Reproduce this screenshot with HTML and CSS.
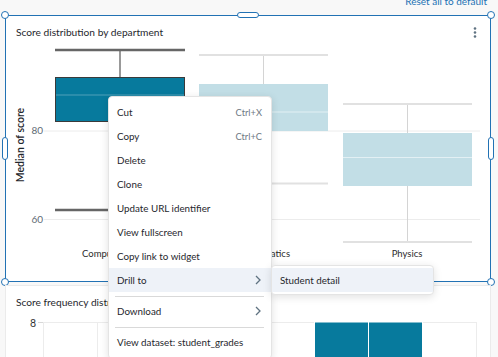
FILE: index.html
```html
<!DOCTYPE html>
<html>
<head>
<meta charset="utf-8">
<link rel="stylesheet" href="styles.css">
</head>
<body>
<div class="page">
  <div class="topbar"><span class="reset">Reset all to default</span></div>

  <section class="widget selected">
    <header class="w-head">
      <h2 class="w-title">Score distribution by department</h2>
      <svg class="kebab" width="4" height="12" viewBox="0 0 4 12"><circle cx="2" cy="1.5" r="1.3"/><circle cx="2" cy="5.5" r="1.3"/><circle cx="2" cy="9.5" r="1.3"/></svg>
    </header>
    <svg class="chart" width="484" height="236" viewBox="0 0 484 236">
      <g transform="translate(-6,-44)">
        <line class="grid" x1="44" y1="131" x2="480" y2="131"/>
        <line class="grid" x1="44" y1="219.5" x2="480" y2="219.5"/>
        <text class="tick" x="43" y="133.5" text-anchor="end">80</text>
        <text class="tick" x="43" y="222.5" text-anchor="end">60</text>
        <text class="axis-title" transform="translate(24,145) rotate(-90)" text-anchor="middle">Median of score</text>

        <line class="stem-dark" x1="120" y1="50" x2="120" y2="77"/>
        <line class="stem-dark" x1="120" y1="121" x2="120" y2="210"/>
        <line class="cap-dark" x1="55" y1="50" x2="185" y2="50"/>
        <line class="cap-dark" x1="55" y1="210" x2="185" y2="210"/>
        <rect class="box-dark" x="55.5" y="77.5" width="129" height="44"/>
        <line class="median-dark" x1="56" y1="95" x2="184" y2="95"/>

        <line class="stem-light" x1="263.5" y1="55" x2="263.5" y2="84"/>
        <line class="stem-light" x1="263.5" y1="131" x2="263.5" y2="183"/>
        <line class="cap-light" x1="199" y1="55" x2="328" y2="55"/>
        <line class="cap-light" x1="199" y1="183.5" x2="328" y2="183.5"/>
        <rect class="box-light" x="199" y="84" width="129" height="47"/>
        <line class="median-light" x1="199" y1="112" x2="328" y2="112"/>

        <line class="stem-light" x1="407.5" y1="104" x2="407.5" y2="133"/>
        <line class="stem-light" x1="407.5" y1="186" x2="407.5" y2="242"/>
        <line class="cap-light" x1="343" y1="104" x2="472" y2="104"/>
        <line class="cap-light" x1="343" y1="242" x2="472" y2="242"/>
        <rect class="box-light" x="343" y="133" width="129" height="53"/>
        <line class="median-light" x1="343" y1="157.5" x2="472" y2="157.5"/>

        <text class="xlab" x="120" y="257" text-anchor="middle">Computer Science</text>
        <text class="xlab" x="263" y="257" text-anchor="middle">Mathematics</text>
        <text class="xlab" x="407" y="257" text-anchor="middle">Physics</text>
      </g>
    </svg>
    <span class="handle corner tl"></span>
    <span class="handle corner tr"></span>
    <span class="handle corner bl"></span>
    <span class="handle corner br"></span>
    <span class="handle pill-h top"></span>
    <span class="handle pill-v left"></span>
    <span class="handle pill-v right"></span>
  </section>

  <section class="widget second">
    <header class="w-head">
      <h2 class="w-title">Score frequency distribution</h2>
    </header>
    <svg class="chart2" width="484" height="60" viewBox="0 0 484 60">
      <g transform="translate(-6,-314)">
        <line class="grid" x1="43" y1="322.5" x2="476" y2="322.5"/>
        <line class="tickline" x1="38" y1="322.5" x2="43" y2="322.5"/>
        <text class="tick big" x="36" y="326.5" text-anchor="end">8</text>
        <line class="vgrid" x1="43.5" y1="322" x2="43.5" y2="370"/>
        <line class="vgrid" x1="97.5" y1="322" x2="97.5" y2="370"/>
        <line class="vgrid" x1="151.5" y1="322" x2="151.5" y2="370"/>
        <line class="vgrid" x1="205.5" y1="322" x2="205.5" y2="370"/>
        <line class="vgrid" x1="260.5" y1="322" x2="260.5" y2="370"/>
        <line class="vgrid" x1="476.5" y1="322" x2="476.5" y2="370"/>
        <rect class="bar" x="314.5" y="322" width="54" height="50"/>
        <rect class="bar" x="368.5" y="322" width="54" height="50"/>
      </g>
    </svg>
  </section>
</div>

<div class="menu">
  <div class="item"><span>Cut</span><span class="sc">Ctrl+X</span></div>
  <div class="item"><span>Copy</span><span class="sc">Ctrl+C</span></div>
  <div class="item"><span>Delete</span></div>
  <div class="item"><span>Clone</span></div>
  <div class="item"><span>Update URL identifier</span></div>
  <div class="item"><span>View fullscreen</span></div>
  <div class="item"><span>Copy link to widget</span></div>
  <div class="item active"><span>Drill to</span><svg class="chev" width="6" height="10" viewBox="0 0 6 10"><path d="M1 1l4 4-4 4"/></svg></div>
  <div class="sep"></div>
  <div class="item"><span>Download</span><svg class="chev" width="6" height="10" viewBox="0 0 6 10"><path d="M1 1l4 4-4 4"/></svg></div>
  <div class="sep"></div>
  <div class="item"><span>View dataset: student_grades</span></div>
</div>

<div class="submenu">
  <div class="item active"><span>Student detail</span></div>
</div>
</body>
</html>
```

FILE: styles.css
```css
* { box-sizing: border-box; }
html, body { margin: 0; padding: 0; }
body {
  width: 498px;
  height: 357px;
  overflow: hidden;
  background: #f8f8f8;
  font-family: "Segoe UI", Lato, "Open Sans", sans-serif;
  color: #1f272d;
  position: relative;
}
.page { display: flex; flex-direction: column; }
.topbar {
  height: 15px;
  display: flex;
  justify-content: flex-end;
  padding-right: 11px;
}
.reset {
  font-size: 10px;
  line-height: 12px;
  margin-top: -5px;
  color: #2272b4;
}
.widget {
  position: relative;
  margin-left: 5px;
  width: 486px;
  background: #fff;
}
.selected {
  height: 267px;
  border: 1px solid #2272b4;
}
.second {
  margin-top: 3px;
  height: 80px;
  border: 1px solid #ebebeb;
}
.w-head {
  height: 28px;
  padding: 8px 13px 0 10px;
  display: flex;
  justify-content: space-between;
  align-items: flex-start;
}
.w-title {
  margin: 0;
  font-size: 10.2px;
  line-height: 16px;
  font-weight: 400;
  color: #1f272d;
}
.kebab { fill: #5f7281; margin-top: 3px; }
.chart, .chart2 { display: block; }
.grid { stroke: #ececec; stroke-width: 1; }
.vgrid { stroke: #ececec; stroke-width: 1; }
.tickline { stroke: #d8d8d8; stroke-width: 1; }
.tick { font-size: 10px; fill: #5f6b75; font-family: "Segoe UI", Lato, "Open Sans", sans-serif; }
.tick.big { font-size: 10.5px; fill: #333; }
.axis-title { font-size: 10.5px; font-weight: 600; fill: #1f272d; font-family: "Segoe UI", Lato, "Open Sans", sans-serif; }
.xlab { font-size: 9.5px; fill: #2b2b2b; font-family: "Segoe UI", Lato, "Open Sans", sans-serif; }
.cap-dark { stroke: #666; stroke-width: 2.4; }
.stem-dark { stroke: #777; stroke-width: 1.5; }
.box-dark { fill: #077a9d; stroke: #3a3a3a; stroke-width: 1; }
.median-dark { stroke: rgba(255,255,255,0.3); stroke-width: 1; }
.cap-light { stroke: #e1e1e1; stroke-width: 2; }
.stem-light { stroke: #d4d4d4; stroke-width: 1; }
.box-light { fill: #c2dee6; }
.median-light { stroke: rgba(255,255,255,0.55); stroke-width: 1; }
.bar { fill: #077a9d; stroke: #fff; stroke-width: 1; }

.handle {
  position: absolute;
  background: #fff;
  border: 1px solid #2272b4;
}
.corner { width: 8px; height: 8px; border-radius: 50%; }
.tl { left: -5px; top: -5px; }
.tr { right: -5px; top: -5px; }
.bl { left: -5px; bottom: -5px; }
.br { right: -5px; bottom: -5px; }
.pill-h { width: 22px; height: 6px; border-radius: 3px; left: 231px; top: -4px; }
.pill-v { width: 6px; height: 23px; border-radius: 3px; top: 121px; }
.pill-v.left { left: -4px; }
.pill-v.right { right: -4px; }

.menu, .submenu {
  position: absolute;
  background: #fff;
  border: 1px solid #e4e4e4;
  border-radius: 4px;
  box-shadow: 0 2px 8px rgba(0,0,0,0.12);
  font-size: 9.8px;
  color: #1f272d;
}
.menu {
  left: 108px;
  top: 96px;
  width: 164px;
  padding: 3px 0 4px;
}
.submenu {
  left: 271px;
  top: 265px;
  width: 163px;
  padding: 2px 0;
}
.item {
  height: 24px;
  display: flex;
  align-items: center;
  justify-content: space-between;
  padding: 0 9px 0 8px;
}
.item.active { background: #eef2f8; }
.sc { color: #6f7a84; font-size: 9.3px; }
.chev { fill: none; stroke: #5f7281; stroke-width: 1.3; margin-right: 1px; }
.sep {
  height: 1px;
  background: #d9d9d9;
  margin: 4px 7px 2px 6px;
}
```
